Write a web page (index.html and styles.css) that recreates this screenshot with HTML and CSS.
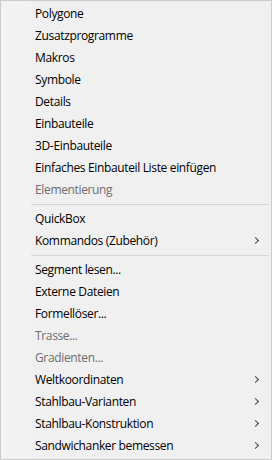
FILE: index.html
```html
<!DOCTYPE html>
<html lang="de">
<head>
  <meta charset="UTF-8">
  <meta name="viewport" content="width=device-width, initial-scale=1.0">
  <title>Kontextmenü</title>
  <link rel="stylesheet" href="styles.css">
</head>
<body>

<div class="menu">
  <div class="item">Polygone</div>
  <div class="item">Zusatzprogramme</div>
  <div class="item">Makros</div>
  <div class="item">Symbole</div>
  <div class="item">Details</div>
  <div class="item">Einbauteile</div>
  <div class="item">3D-Einbauteile</div>
  <div class="item">Einfaches Einbauteil Liste einfügen</div>
  <div class="item disabled">Elementierung</div>
  <div class="sep"></div>
  <div class="item">QuickBox</div>
  <div class="item sub">Kommandos (Zubehör)</div>
  <div class="sep"></div>
  <div class="item">Segment lesen...</div>
  <div class="item">Externe Dateien</div>
  <div class="item">Formellöser...</div>
  <div class="item disabled">Trasse...</div>
  <div class="item disabled">Gradienten...</div>
  <div class="item sub">Weltkoordinaten</div>
  <div class="item sub">Stahlbau-Varianten</div>
  <div class="item sub">Stahlbau-Konstruktion</div>
  <div class="item sub">Sandwichanker bemessen</div>
</div>

</body>
</html>
```

FILE: styles.css
```css
html, body {
  margin: 0;
  padding: 0;
}
body {
  font-family: "Open Sans", "Noto Sans", sans-serif;
  font-size: 12px;
  letter-spacing: -0.35px;
  background: #f0f0f0;
}
.menu {
  width: 270px;
  border: 1px solid #cccccc;
  padding: 2px 0;
  background: linear-gradient(to right, #f3f3f3 30px, #f0f0f0 30px);
  display: flex;
  flex-direction: column;
}
.item {
  height: 22px;
  line-height: 22px;
  padding-left: 34px;
  color: #000;
  white-space: nowrap;
  position: relative;
}
.disabled {
  color: #6d6d6d;
}
.sub::after {
  content: "";
  position: absolute;
  right: 13px;
  top: 8px;
  width: 4px;
  height: 4px;
  border-right: 1px solid #444;
  border-top: 1px solid #444;
  transform: rotate(45deg);
}
.sep {
  height: 1px;
  margin: 3px 2px 3px 30px;
  background: #d7d7d7;
}
```
